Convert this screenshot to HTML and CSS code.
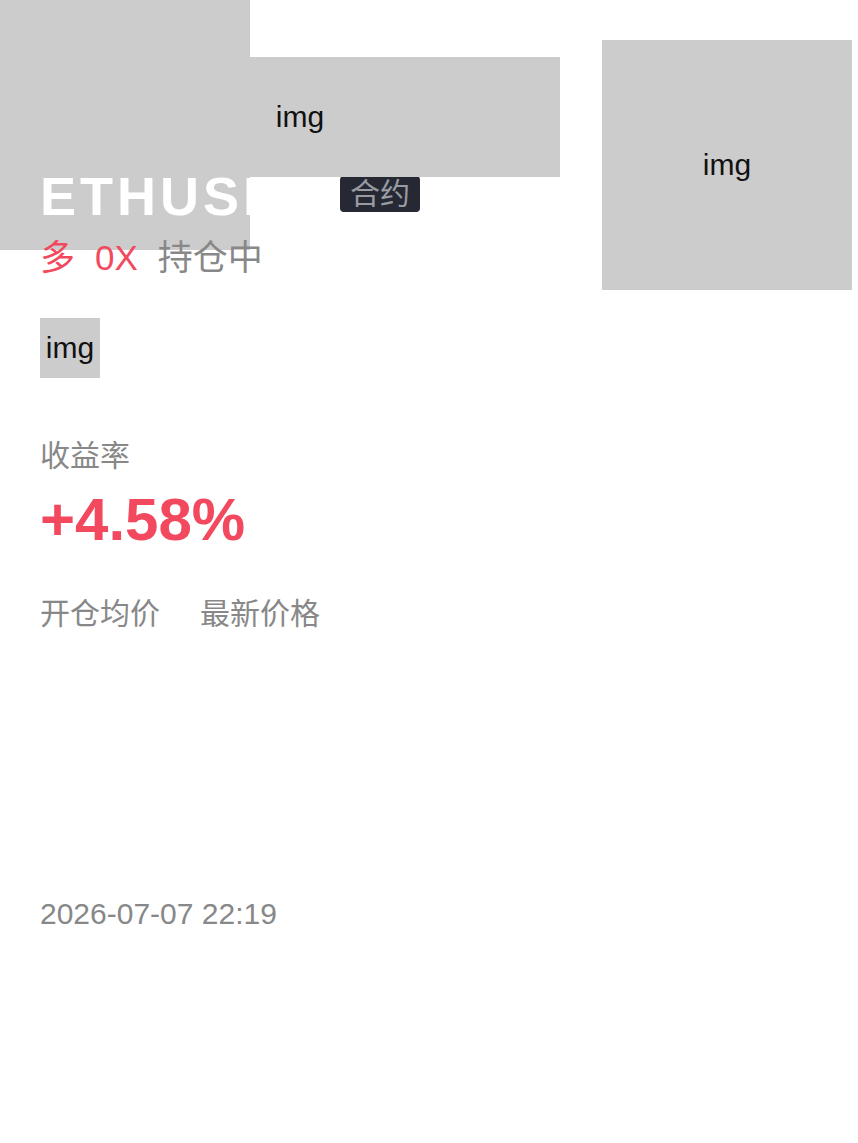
FILE: index.html
```html
<!DOCTYPE html>
<html lang="zh-CN">
<head>
    <meta charset="UTF-8">
    <meta name="viewport" content="width=device-width, initial-scale=1.0">
    <title>ETHUSDT 持仓分享</title>
    <link rel="stylesheet" href="styles.css">
</head>
<body>
    <div class="poster">
        <!-- decorative pictures, their files are not loaded -->
        <div class="pic pic-bg"></div>
        <div class="pic pic-banner">img</div>
        <div class="pic pic-side">img</div>

        <div class="content">
            <div class="title-row">
                <span class="symbol">ETHUSDT</span>
                <span class="badge">合约</span>
            </div>
            <div class="tag-row">
                <span class="up">多</span>
                <span class="up">0X</span>
                <span class="muted">持仓中</span>
            </div>

            <div class="pic pic-icon">img</div>

            <div class="label rate-label">收益率</div>
            <div class="rate up">+4.58%</div>

            <div class="price-row">
                <div class="label">开仓均价</div>
                <div class="label">最新价格</div>
            </div>

            <div class="time">2026-07-07 22:19</div>
        </div>
    </div>
</body>
</html>
```

FILE: styles.css
```css
body {
    margin: 0;
    background: #fff;
    font-family: "Liberation Sans", "Noto Sans CJK SC", sans-serif;
    font-size: 30px;
    color: #888;
}
.poster {
    position: relative;
    width: 858px;
    height: 1143px;
    overflow: hidden;
}
.pic {
    background: #ccc;
    color: #111;
    display: flex;
    align-items: center;
    justify-content: center;
    font-size: 30px;
}
.pic-bg {
    position: absolute;
    left: 0;
    top: 0;
    width: 250px;
    height: 250px;
    z-index: 0;
}
.pic-banner {
    position: absolute;
    left: 40px;
    top: 57px;
    width: 520px;
    height: 120px;
    z-index: 2;
}
.pic-side {
    position: absolute;
    left: 602px;
    top: 40px;
    width: 250px;
    height: 250px;
    z-index: 2;
}
.content {
    position: relative;
    z-index: 1;
    padding: 169px 40px 0;
}
.title-row {
    display: flex;
    align-items: center;
    gap: 17px;
    height: 54px;
}
.symbol {
    color: #fff;
    font-size: 54px;
    font-weight: bold;
    line-height: 1;
    letter-spacing: 4px;
}
.badge {
    background: #262933;
    color: #989ba2;
    font-size: 30px;
    line-height: 36px;
    padding: 0 10px;
    border-radius: 4px;
    margin-top: -4px;
}
.tag-row {
    display: flex;
    gap: 20px;
    margin-top: 15px;
    font-size: 35px;
    line-height: 40px;
}
.up {
    color: #f2495f;
}
.muted {
    color: #888;
}
.pic-icon {
    width: 60px;
    height: 60px;
    margin-top: 40px;
}
.label {
    line-height: 36px;
}
.rate-label {
    margin-top: 60px;
}
.rate {
    margin-top: 16px;
    font-size: 60px;
    font-weight: bold;
    line-height: 1;
}
.price-row {
    display: flex;
    gap: 40px;
    margin-top: 46px;
}
.time {
    margin-top: 264px;
    line-height: 36px;
}
```
